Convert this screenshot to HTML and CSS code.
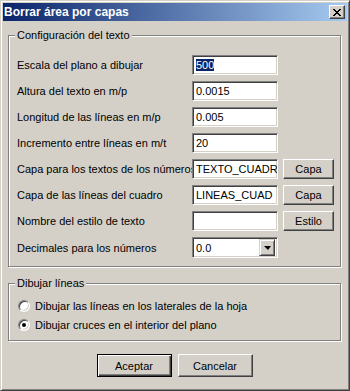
FILE: index.html
```html
<!DOCTYPE html>
<html lang="es">
<head>
  <meta charset="UTF-8" />
  <title>Borrar área por capas</title>
  <link rel="stylesheet" href="styles.css">
</head>
<body>
  <div class="window">
    <div class="titlebar">
      <span class="title">Borrar área por capas</span>
      <div class="close-btn">
        <svg width="8" height="7" viewBox="0 0 8 7" shape-rendering="crispEdges">
          <path fill="#000" d="M0 0h2v1h-2zM6 0h2v1h-2zM1 1h2v1h-2zM5 1h2v1h-2zM2 2h4v1h-4zM3 3h2v1h-2zM2 4h4v1h-4zM1 5h2v1h-2zM5 5h2v1h-2zM0 6h2v1h-2zM6 6h2v1h-2z"/>
        </svg>
      </div>
    </div>

    <div class="client">
      <!-- Text settings -->
      <fieldset class="group">
        <legend>Configuración del texto</legend>

        <div class="row">
          <label>Escala del plano a dibujar</label>
          <div class="edit"><span class="selected">500</span></div>
        </div>
        <div class="row">
          <label>Altura del texto en m/p</label>
          <div class="edit">0.0015</div>
        </div>
        <div class="row">
          <label>Longitud de las líneas en m/p</label>
          <div class="edit">0.005</div>
        </div>
        <div class="row">
          <label>Incremento entre líneas en m/t</label>
          <div class="edit">20</div>
        </div>
        <div class="row">
          <label>Capa para los textos de los números</label>
          <div class="edit">TEXTO_CUADR</div>
          <div class="btn small">Capa</div>
        </div>
        <div class="row">
          <label>Capa de las líneas del cuadro</label>
          <div class="edit">LINEAS_CUAD</div>
          <div class="btn small">Capa</div>
        </div>
        <div class="row">
          <label>Nombre del estilo de texto</label>
          <div class="edit"></div>
          <div class="btn small">Estilo</div>
        </div>
        <div class="row combo-row">
          <label>Decimales para los números</label>
          <div class="combo">
            <span class="combo-value">0.0</span>
            <span class="combo-arrow"><span class="arrow"></span></span>
          </div>
        </div>
      </fieldset>

      <!-- Line options -->
      <fieldset class="group lines">
        <legend>Dibujar líneas</legend>
        <div class="radio-row">
          <span class="radio"></span>
          <span>Dibujar las líneas en los laterales de la hoja</span>
        </div>
        <div class="radio-row">
          <span class="radio checked"></span>
          <span>Dibujar cruces en el interior del plano</span>
        </div>
      </fieldset>

      <div class="actions">
        <div class="btn default">Aceptar</div>
        <div class="btn">Cancelar</div>
      </div>
    </div>
  </div>
</body>
</html>
```

FILE: styles.css
```css
body {
  margin: 0;
  background: #d4d0c8;
  font-family: "Liberation Sans", Arial, sans-serif;
  font-size: 11px;
  color: #000;
}

.window {
  width: 350px;
  height: 391px;
  box-sizing: border-box;
  border: 1px solid;
  border-color: #d4d0c8 #404040 #404040 #d4d0c8;
  box-shadow: inset 1px 1px #fff, inset -1px -1px #808080;
  padding: 2px;
  background: #d4d0c8;
}

.titlebar {
  height: 18px;
  display: flex;
  align-items: center;
  justify-content: space-between;
  padding-left: 1px;
  background: linear-gradient(to right, #0a246a, #a6caf0);
}

.title {
  color: #fff;
  font-weight: bold;
  font-size: 12px;
}

.close-btn {
  width: 16px;
  height: 14px;
  box-sizing: border-box;
  margin-right: 2px;
  border: 1px solid;
  border-color: #fff #404040 #404040 #fff;
  box-shadow: inset -1px -1px #808080;
  background: #d4d0c8;
  display: flex;
  align-items: center;
  justify-content: center;
}

.client {
  padding: 8px 6px 0 5px;
}

.group {
  margin: 0;
  padding: 13px 6px 8px 8px;
  border: 1px solid #808080;
  box-shadow: inset 1px 1px #fff, 1px 1px #fff;
  min-width: 0;
}

.group legend {
  padding: 0 2px;
  margin-left: -2px;
  line-height: 13px;
  background: #d4d0c8;
}

.row {
  display: flex;
  align-items: center;
  height: 20px;
  margin-bottom: 6px;
}

.row:last-child {
  margin-bottom: 0;
}

.row label {
  width: 175px;
  flex: none;
  white-space: nowrap;
}

.edit,
.combo {
  width: 86px;
  height: 20px;
  box-sizing: border-box;
  border: 1px solid;
  border-color: #808080 #fff #fff #808080;
  box-shadow: inset 1px 1px #404040, inset -1px -1px #d4d0c8;
  background: #fff;
  padding: 0 2px 0 3px;
  line-height: 18px;
  white-space: nowrap;
  overflow: hidden;
  flex: none;
}

.selected {
  background: #0a246a;
  color: #fff;
}

.combo-row {
  height: 21px;
}

.combo {
  height: 21px;
  display: flex;
  align-items: center;
  padding: 2px;
  justify-content: space-between;
}

.combo-value {
  padding-left: 1px;
}

.combo-arrow {
  width: 16px;
  height: 17px;
  box-sizing: border-box;
  border: 1px solid;
  border-color: #d4d0c8 #404040 #404040 #d4d0c8;
  box-shadow: inset 1px 1px #fff, inset -1px -1px #808080;
  background: #d4d0c8;
  display: flex;
  align-items: center;
  justify-content: center;
}

.arrow {
  width: 0;
  height: 0;
  border-left: 4px solid transparent;
  border-right: 3px solid transparent;
  border-top: 4px solid #000;
  margin-top: 1px;
}

.btn {
  width: 75px;
  height: 23px;
  box-sizing: border-box;
  border: 1px solid;
  border-color: #fff #404040 #404040 #fff;
  box-shadow: inset -1px -1px #808080;
  background: #d4d0c8;
  display: flex;
  align-items: center;
  justify-content: center;
  flex: none;
}

.btn.small {
  width: 51px;
  height: 20px;
  margin-left: 5px;
}

.btn.default {
  border: 1px solid #000;
  box-shadow: inset 1px 1px #fff, inset -1px -1px #404040, inset -2px -2px #808080;
}

.lines {
  margin-top: 10px;
  padding: 6px 6px 6px 8px;
}

.radio-row {
  display: flex;
  align-items: center;
  height: 19px;
  white-space: nowrap;
}

.radio {
  width: 12px;
  height: 12px;
  box-sizing: border-box;
  margin: 0 5px 0 1px;
  border-radius: 50%;
  border: 1px solid;
  border-color: #808080 #fff #fff #808080;
  box-shadow: inset 1px 1px #404040, inset -1px -1px #d4d0c8;
  background: #fff;
  display: flex;
  align-items: center;
  justify-content: center;
  flex: none;
}

.radio.checked::after {
  content: "";
  width: 4px;
  height: 4px;
  border-radius: 50%;
  background: #000;
}

.actions {
  display: flex;
  justify-content: center;
  gap: 6px;
  margin-top: 13px;
}
```
